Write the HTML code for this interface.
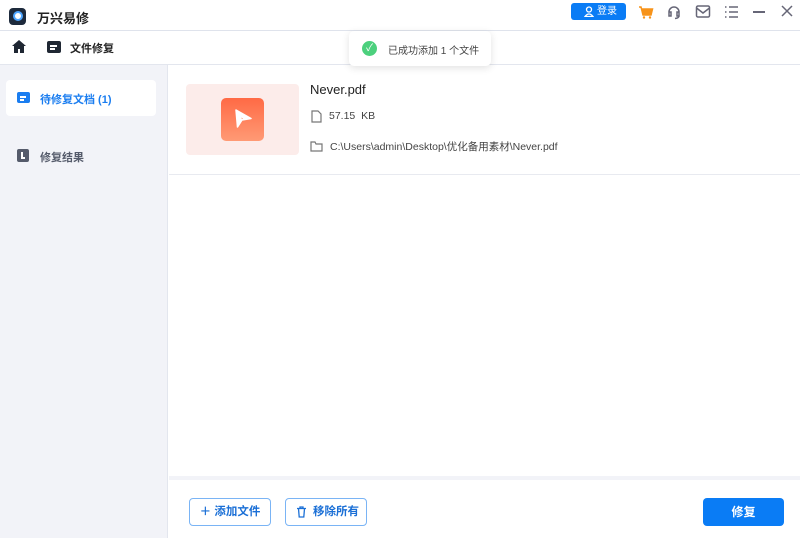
<!DOCTYPE html><html><head><meta charset="utf-8"><style>
*{margin:0;padding:0;box-sizing:border-box}
body{width:800px;height:538px;overflow:hidden;background:#fff;font-family:"Liberation Sans","Noto Sans CJK SC",sans-serif;position:relative;color:#222}
.a{position:absolute}
</style></head><body>
<div class="a" style="left:0;top:0;width:800px;height:31px;border-bottom:1px solid #dfe3ec"></div>
<div class="a" style="left:9px;top:8px;width:17px;height:17px;border-radius:4px;background:#1d2a3c"></div>
<div class="a" style="left:13px;top:11px;width:10px;height:10px;border-radius:50%;border:2.5px solid #4fa6ff;background:#fff"></div>
<div class="a" style="left:37px;top:8px;font-size:13px;font-weight:bold">万兴易修</div>
<div class="a" style="left:571px;top:3px;width:55px;height:17px;background:#0a7cf5;border-radius:3px;color:#fff;font-size:10px;line-height:17px;padding-left:26px">登录</div>
<svg class="a" style="left:584px;top:6px" width="10" height="11" fill="none" stroke="#fff" stroke-width="1.3"><circle cx="5" cy="3.5" r="2.5"/><path d="M1 10.5q4-5 8 0z"/></svg>
<svg class="a" style="left:638px;top:4px" width="16" height="16" viewBox="0 0 16 16"><path d="M1 3h2l2 8h8l1.5-6H4" fill="#f7931a" stroke="#f7931a" stroke-width="1.5"/><circle cx="6" cy="13.5" r="1.2" fill="#f7931a"/><circle cx="12" cy="13.5" r="1.2" fill="#f7931a"/></svg>
<svg class="a" style="left:666px;top:4px" width="16" height="16" viewBox="0 0 16 16" fill="none" stroke="#667" stroke-width="1.5"><path d="M3 10V8a5 5 0 0110 0v2M3 8h2v4H3zM11 8h2v4h-2zM13 12q0 2-4 2.5"/></svg>
<svg class="a" style="left:695px;top:4px" width="16" height="15" viewBox="0 0 16 15" fill="none" stroke="#667" stroke-width="1.5"><rect x="1.5" y="2" width="13" height="11" rx="1.5"/><path d="M1.5 4l6.5 5 6.5-5"/></svg>
<svg class="a" style="left:724px;top:5px" width="15" height="14" viewBox="0 0 15 14" stroke="#667" stroke-width="1.5"><path d="M1 2h1.5M1 7h1.5M1 12h1.5M5 2h9M5 7h9M5 12h9"/></svg>
<div class="a" style="left:753px;top:11px;width:12px;height:1.5px;background:#667"></div>
<svg class="a" style="left:781px;top:5px" width="12" height="12" stroke="#667" stroke-width="1.5"><path d="M1 1l10 10M11 1L1 11"/></svg>
<div class="a" style="left:0;top:32px;width:800px;height:33px;border-bottom:1px solid #e3e6ee"></div>
<svg class="a" style="left:12px;top:40px" width="14" height="13" viewBox="0 0 14 13"><path d="M7 0L0 6h2v7h4V9h2v4h4V6h2z" fill="#1f2733"/></svg>
<div class="a" style="left:47px;top:41px;width:14px;height:12px;background:#1f2733;border-radius:2px"></div>
<div class="a" style="left:50px;top:45px;width:7px;height:1.5px;background:#fff"></div>
<div class="a" style="left:50px;top:48px;width:5px;height:1.5px;background:#fff"></div>
<div class="a" style="left:70px;top:40px;font-size:11px;font-weight:bold">文件修复</div>
<div class="a" style="left:0;top:65px;width:168px;height:473px;background:#f2f3f8;border-right:1px solid #e3e6ee"></div>
<div class="a" style="left:6px;top:80px;width:150px;height:36px;background:#fff;border-radius:4px"></div>
<div class="a" style="left:17px;top:92px;width:13px;height:11px;background:#1a7df0;border-radius:2px"></div>
<div class="a" style="left:20px;top:96px;width:6px;height:1.5px;background:#fff"></div>
<div class="a" style="left:20px;top:99px;width:4px;height:1.5px;background:#fff"></div>
<div class="a" style="left:40px;top:91px;font-size:11px;font-weight:bold;color:#1a7df0">待修复文档 (1)</div>
<div class="a" style="left:17px;top:149px;width:12px;height:13px;background:#555b6b;border-radius:2px"></div>
<div class="a" style="left:21px;top:152px;width:1.5px;height:6px;background:#fff"></div>
<div class="a" style="left:21px;top:157px;width:4px;height:1.5px;background:#fff"></div>
<div class="a" style="left:40px;top:149px;font-size:11px;color:#555b6b;font-weight:bold">修复结果</div>
<div class="a" style="left:186px;top:84px;width:113px;height:71px;background:#fcecea;border-radius:4px"></div>
<div class="a" style="left:221px;top:98px;width:43px;height:43px;border-radius:5px;background:linear-gradient(#ff6a45,#ff9a75)"></div>
<svg class="a" style="left:231px;top:107px" width="24" height="24" viewBox="0 0 24 24"><path d="M5 3L20 11.5 11 13 6.5 20z M9 9l1.5 4 3-1.5z" fill="#fff" fill-rule="evenodd" stroke="#fff" stroke-width="1.5" stroke-linejoin="round"/></svg>
<div class="a" style="left:310px;top:82px;font-size:13px">Never.pdf</div>
<svg class="a" style="left:311px;top:110px" width="11" height="13" fill="none" stroke="#777" stroke-width="1.2"><path d="M1 1h6l3 3v8H1z"/></svg>
<div class="a" style="left:329px;top:110px;font-size:10.5px;color:#444">57.15&nbsp;&nbsp;KB</div>
<svg class="a" style="left:310px;top:141px" width="13" height="11" fill="none" stroke="#777" stroke-width="1.2"><path d="M1 1h4l1 2h6v7H1z"/></svg>
<div class="a" style="left:330px;top:139px;font-size:10.5px;color:#444">C:\Users\admin\Desktop\优化备用素材\Never.pdf</div>
<div class="a" style="left:169px;top:174px;width:631px;height:1px;background:#e8eaf0"></div>
<div class="a" style="left:169px;top:476px;width:631px;height:4px;background:#f2f3f8"></div>
<div class="a" style="left:349px;top:31px;width:142px;height:35px;background:#fff;border-radius:5px;box-shadow:0 2px 8px rgba(0,0,0,.12)"></div>
<div class="a" style="left:362px;top:41px;width:15px;height:15px;border-radius:50%;background:#4cd07d;color:#fff;font-size:10px;text-align:center;line-height:15px">✓</div>
<div class="a" style="left:388px;top:42px;font-size:10px;color:#444">已成功添加 1 个文件</div>
<div class="a" style="left:189px;top:498px;width:82px;height:28px;border:1px solid #7ab4f5;border-radius:4px;color:#1a6fd6;font-size:11.5px;font-weight:bold;line-height:26px;text-align:center">＋ 添加文件</div>
<div class="a" style="left:285px;top:498px;width:82px;height:28px;border:1px solid #7ab4f5;border-radius:4px;color:#1a6fd6;font-size:11.5px;font-weight:bold;line-height:26px;padding-left:27px">移除所有</div>
<svg class="a" style="left:296px;top:506px" width="11" height="12" fill="none" stroke="#1a6fd6" stroke-width="1.3"><path d="M1 2.5h9M4 2.5V1h3v1.5M2.5 2.5l.7 8.5h4.6l.7-8.5"/></svg>
<div class="a" style="left:703px;top:498px;width:81px;height:28px;background:#0a7cf5;border-radius:4px;color:#fff;font-size:12px;font-weight:bold;line-height:28px;text-align:center">修复</div>
</body></html>
